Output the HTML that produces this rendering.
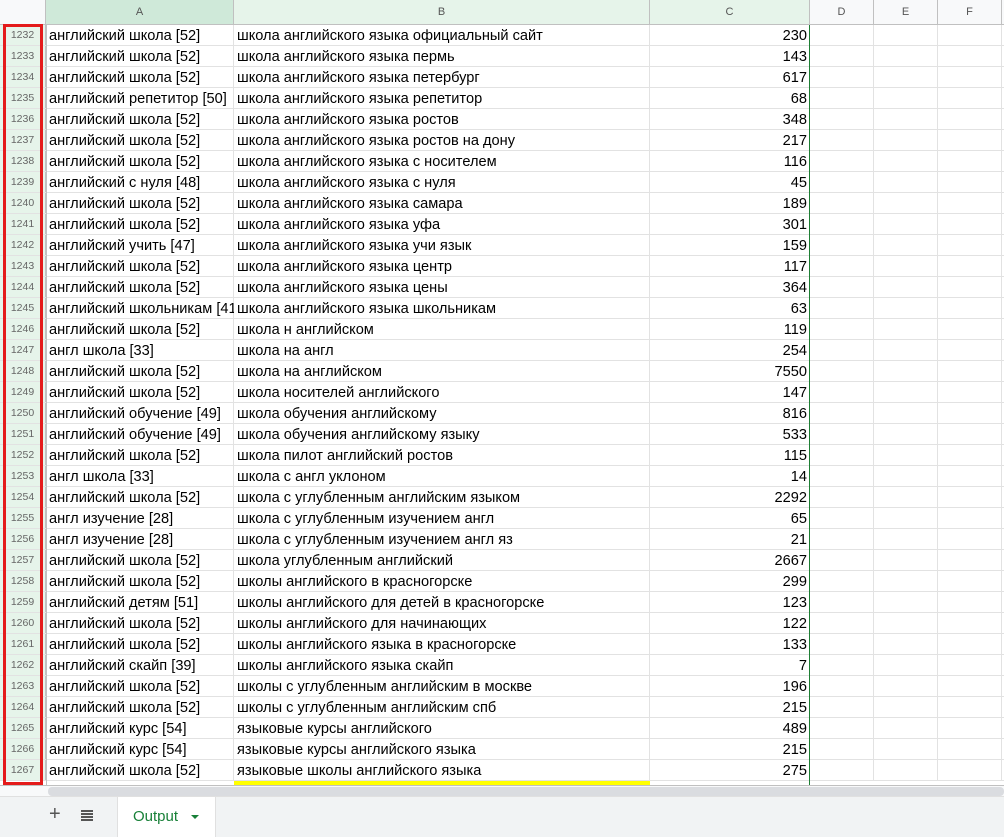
<!DOCTYPE html>
<html><head><meta charset="utf-8"><style>
*{margin:0;padding:0;box-sizing:border-box}
body{width:1004px;height:837px;overflow:hidden;background:#fff;font-family:"Liberation Sans",Arial,sans-serif;position:relative}
.hdr{position:absolute;top:0;left:0;width:1004px;height:25px;background:#f8f9fa;border-bottom:1px solid #c0c0c0}
.hc{position:absolute;top:0;height:24px;line-height:24px;text-align:center;font-size:11px;color:#555;border-right:1px solid #c0c0c0}
.row{position:absolute;left:0;width:1004px;height:21px;border-bottom:1px solid #e2e2e2}
.row div{position:absolute;top:0;height:20px;line-height:23px;font-size:14.6px;color:#000;border-right:1px solid #e2e2e2;overflow:hidden;white-space:nowrap;padding-left:3px}
.row .n{left:0;width:46px;background:#e6f4ea;color:#666;font-size:10.5px;text-align:center;padding:0;line-height:20px;border-right:1px solid #c0c0c0}
.row .a{left:46px;width:188px;overflow:visible;z-index:1}
.row .b{left:234px;width:416px;background:#fff;z-index:2}
.row .c{left:650px;width:160px;text-align:right;padding-right:3px;border-right:none}
.row .d{left:810px;width:64px;padding:0}
.row .e{left:874px;width:64px;padding:0}
.row .f{left:938px;width:64px;padding:0}
.hb{position:absolute;left:81px;width:12px;height:2px;background:#555}
</style></head><body>
<div class="hdr">
<div class="hc" style="left:0;width:46px;background:#f8f9fa"></div>
<div class="hc" style="left:46px;width:188px;background:#cfe9d9">A</div>
<div class="hc" style="left:234px;width:416px;background:#e6f4ea">B</div>
<div class="hc" style="left:650px;width:160px;background:#e6f4ea">C</div>
<div class="hc" style="left:810px;width:64px">D</div>
<div class="hc" style="left:874px;width:64px">E</div>
<div class="hc" style="left:938px;width:64px">F</div>
</div>
<div id="rows"></div>
<div style="position:absolute;left:0;top:781px;width:1004px;height:5px;background:#fff;border-bottom:1px solid #c0c0c0"></div>
<div style="position:absolute;left:234px;top:781px;width:416px;height:4px;background:#ffff00"></div>
<div style="position:absolute;left:46px;top:25px;width:1px;height:761px;background:#c0c0c0"></div>
<div style="position:absolute;left:809px;top:25px;width:1px;height:760px;background:#1e7e34"></div>
<div style="position:absolute;left:0;top:786px;width:1004px;height:11px;background:#f8f9fa"></div>
<div style="position:absolute;left:48px;top:787px;width:956px;height:9px;background:#dadce0;border-radius:4px"></div>
<div style="position:absolute;left:0;top:796px;width:1004px;height:41px;background:#f1f3f4;border-top:1px solid #e0e0e0"></div>
<div style="position:absolute;left:49px;top:803px;font-size:20px;color:#555">+</div>
<div class="hb" style="top:810px"></div><div class="hb" style="top:813px"></div><div class="hb" style="top:816px"></div><div class="hb" style="top:819px"></div>
<div style="position:absolute;left:117px;top:797px;width:99px;height:40px;background:#fff;border-right:1px solid #e0e0e0;border-left:1px solid #e0e0e0"></div>
<div style="position:absolute;left:133px;top:808px;font-size:15px;color:#188038">Output</div>
<div style="position:absolute;left:191px;top:815px;width:0;height:0;border-left:4px solid transparent;border-right:4px solid transparent;border-top:4px solid #188038"></div>
<div style="position:absolute;left:3px;top:24px;width:40px;height:761px;border:3px solid #e41a1a;z-index:5"></div>
<script>
const d=[
["английский школа [52]","школа английского языка официальный сайт",230],
["английский школа [52]","школа английского языка пермь",143],
["английский школа [52]","школа английского языка петербург",617],
["английский репетитор [50]","школа английского языка репетитор",68],
["английский школа [52]","школа английского языка ростов",348],
["английский школа [52]","школа английского языка ростов на дону",217],
["английский школа [52]","школа английского языка с носителем",116],
["английский с нуля [48]","школа английского языка с нуля",45],
["английский школа [52]","школа английского языка самара",189],
["английский школа [52]","школа английского языка уфа",301],
["английский учить [47]","школа английского языка учи язык",159],
["английский школа [52]","школа английского языка центр",117],
["английский школа [52]","школа английского языка цены",364],
["английский школьникам [41]","школа английского языка школьникам",63],
["английский школа [52]","школа н английском",119],
["англ школа [33]","школа на англ",254],
["английский школа [52]","школа на английском",7550],
["английский школа [52]","школа носителей английского",147],
["английский обучение [49]","школа обучения английскому",816],
["английский обучение [49]","школа обучения английскому языку",533],
["английский школа [52]","школа пилот английский ростов",115],
["англ школа [33]","школа с англ уклоном",14],
["английский школа [52]","школа с углубленным английским языком",2292],
["англ изучение [28]","школа с углубленным изучением англ",65],
["англ изучение [28]","школа с углубленным изучением англ яз",21],
["английский школа [52]","школа углубленным английский",2667],
["английский школа [52]","школы английского в красногорске",299],
["английский детям [51]","школы английского для детей в красногорске",123],
["английский школа [52]","школы английского для начинающих",122],
["английский школа [52]","школы английского языка в красногорске",133],
["английский скайп [39]","школы английского языка скайп",7],
["английский школа [52]","школы с углубленным английским в москве",196],
["английский школа [52]","школы с углубленным английским спб",215],
["английский курс [54]","языковые курсы английского",489],
["английский курс [54]","языковые курсы английского языка",215],
["английский школа [52]","языковые школы английского языка",275]];
let h="";d.forEach((r,i)=>{h+=`<div class="row" style="top:${25+i*21}px"><div class="n">${1232+i}</div><div class="a">${r[0]}</div><div class="b">${r[1]}</div><div class="c">${r[2]}</div><div class="d"></div><div class="e"></div><div class="f"></div></div>`});
document.getElementById("rows").innerHTML=h;
</script>
</body></html>
